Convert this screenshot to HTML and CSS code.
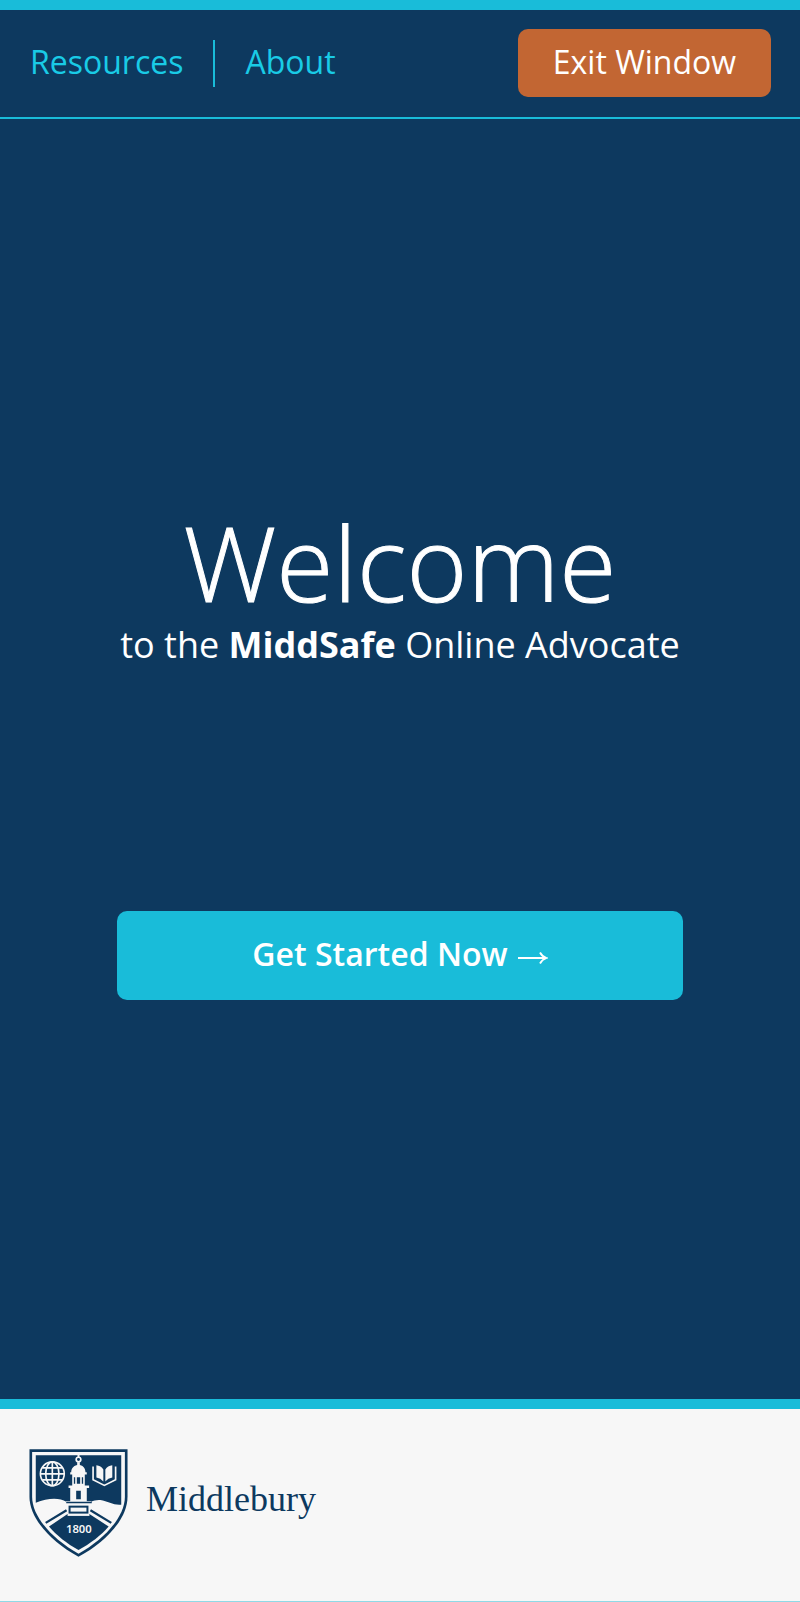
FILE: index.html
```html
<!DOCTYPE html>
<html lang="en">
<head>
<meta charset="utf-8">
<meta name="viewport" content="width=device-width, initial-scale=1">
<title>MiddSafe Online Advocate</title>
<link rel="stylesheet" href="styles.css">
</head>
<body>
<header class="header">
  <nav class="nav">
    <a class="nav-link" href="#resources">Resources</a>
    <a class="nav-link" href="#about">About</a>
  </nav>
  <button class="exit" type="button">Exit Window</button>
</header>
<main class="main">
  <div class="intro">
    <h1 class="title">Welcome</h1>
    <p class="subtitle">to the <strong>MiddSafe</strong> Online Advocate</p>
    <a class="start" href="#start">Get Started Now
      <svg class="arrow" viewBox="0 0 30 14" aria-hidden="true"><path d="M0 7H28" fill="none" stroke="currentColor" stroke-width="2"/><path d="M22 1.5Q24 5.5 28.5 7Q24 8.5 22 12.5" fill="none" stroke="currentColor" stroke-width="1.8"/></svg>
    </a>
  </div>
</main>
<footer class="footer">
  <a class="brand" href="#home">
    <svg class="shield" viewBox="26 26 298 326" aria-hidden="true">
      <path class="ink" d="M27 27H323V170C323 235 260 306 175 351C91 306 27 235 27 170Z"/>
      <path class="paper" d="M35 35H315V170C315 230 255 297 175 342C95 297 35 230 35 170Z"/>
      <path class="ink" d="M46 45H304V194C282 197 264 183 241 180C230 179 221 182 213 185H138C118 172 82 173 46 188Z"/>
      <path class="ink" d="M175 331C140 312 108 286 86 260L142 222H208L266 260C244 286 210 312 175 331Z"/>
      <path class="ink-line" stroke-width="7" d="M76 249L139 211M274 249L211 211"/>
      <path class="paper" d="M171 66H179V76H171ZM153 96C153 82 163 74 175 74S196 82 196 96ZM150 96H200V103H150ZM156 103H194V136H156ZM145 136H207V144H145ZM150 144H200V184H150ZM137 184H213V192H137Z"/>
      <path class="paper" d="M172 42H178V52H172Z"/>
      <circle class="paper-line" cx="175" cy="58" r="7" stroke-width="5"/>
      <path class="ink" d="M161 111H165V131H161ZM185 111H189V131H185ZM170 131V111H180V131ZM168 178V152H182V178ZM138 185H215V190H138Z"/>
      <path class="paper" d="M142 192H208V228H142Z"/>
      <path class="ink" d="M145 197H205V221H145Z"/>
      <path class="paper" d="M151 203H199V215H151Z"/>
      <g class="paper-line" stroke-width="5">
        <circle cx="96" cy="101" r="36"/>
        <ellipse cx="96" cy="101" rx="20" ry="36"/>
        <path d="M96 65V137M60 101H132M66 83H126M66 119H126"/>
      </g>
      <path class="paper" d="M229 75Q243 76 250 88V124Q242 114 229 112ZM277 75Q263 76 256 88V124Q264 114 277 112Z"/>
      <path class="paper-line" stroke-width="5" d="M219 79V119L253 136L287 119V79"/>
      <text class="year" x="176" y="281">1800</text>
    </svg>
    <span class="name">Middlebury</span>
  </a>
</footer>
</body>
</html>
```
FILE: styles.css
```css
* { box-sizing: border-box; }

body {
  margin: 0;
  min-height: 100vh;
  display: flex;
  flex-direction: column;
  background: #0d395f;
  color: #fff;
  font-family: "Open Sans", "Noto Sans", sans-serif;
  font-weight: 400;
}

a { color: inherit; text-decoration: none; }

.header {
  display: flex;
  flex-wrap: wrap;
  align-items: center;
  justify-content: space-between;
  padding: 19px 29px 20px 30px;
  border-top: 10px solid #19bcd9;
  border-bottom: 2px solid #19bcd9;
}

.nav { display: flex; color: #19cbe6; }

.nav-link {
  padding-bottom: 4px;
  font-size: 32px;
  line-height: 43px;
}

.nav-link + .nav-link {
  margin-left: 30px;
  padding-left: 30px;
  border-left: 2px solid #19bcd9;
}

.exit {
  padding: 9px 35px 11px;
  border: 0;
  border-radius: 10px;
  background: #c26633;
  color: #fff;
  font: inherit;
  font-size: 32px;
  line-height: 48px;
  cursor: pointer;
}

.main {
  flex: 1;
  display: flex;
  align-items: center;
  justify-content: center;
  padding: 40px 30px;
}

.intro {
  width: 100%;
  max-width: 566px;
  text-align: center;
}

.title {
  margin: 0;
  font-size: 104px;
  font-weight: 300;
  line-height: 86px;
  -webkit-text-stroke: 1px #fff;
}

.subtitle {
  margin: 16px 0 242px;
  font-size: 36px;
  line-height: 48px;
}

.subtitle strong { font-weight: 700; }

.start {
  display: flex;
  align-items: center;
  justify-content: center;
  gap: 10px;
  padding: 21px 30px 24px;
  border-radius: 10px;
  background: #19bcd9;
  font-size: 32px;
  font-weight: 600;
  line-height: 44px;
}

.arrow { width: 30px; height: 14px; margin-top: 8px; }

.footer {
  padding: 40px 29px 44px;
  border-top: 10px solid #19bcd9;
  border-bottom: 1px solid #8fd9e6;
  background: #f7f7f7;
}

.brand {
  display: inline-flex;
  align-items: center;
  gap: 18px;
  color: #0d395f;
  vertical-align: top;
}

.shield { width: 99px; height: 108px; }

.ink { fill: #0d395f; }
.paper { fill: #f7f7f7; }
.ink-line { fill: none; stroke: #0d395f; }
.paper-line { fill: none; stroke: #f7f7f7; }

.year {
  fill: #f7f7f7;
  font-family: "Noto Sans", sans-serif;
  font-size: 34px;
  font-weight: 600;
  text-anchor: middle;
}

.name {
  padding-bottom: 8px;
  font-family: "Liberation Serif", serif;
  font-size: 36px;
  font-weight: 400;
  line-height: 40px;
}
```
